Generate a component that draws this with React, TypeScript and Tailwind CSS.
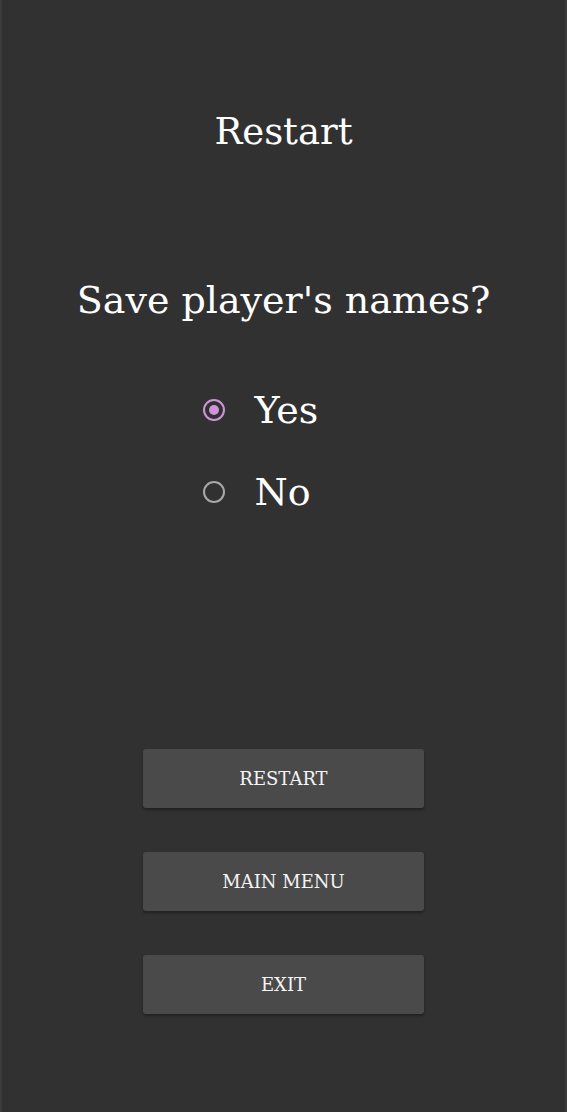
import { useState } from 'react';

const serif = { fontFamily: '"DejaVu Serif", "Liberation Serif", serif' };

function Radio({ checked }: { checked: boolean }) {
  return (
    <span
      className={`flex h-[22px] w-[22px] items-center justify-center rounded-full border-2 ${
        checked ? 'border-[#ce93d8]' : 'border-[#a8a8a8]'
      }`}
    >
      {checked && <span className="h-[10px] w-[10px] rounded-full bg-[#ce93d8]" />}
    </span>
  );
}

export default function App() {
  const [save, setSave] = useState(true);
  const buttons = ['RESTART', 'MAIN MENU', 'EXIT'];

  return (
    <div
      className="flex min-h-[1112px] w-full flex-col items-center border-x-2 border-[#3a3a3a] bg-[#313131] text-white"
      style={serif}
    >
      {/* Title */}
      <h1 className="mt-[108px] text-[37px] leading-[48px]">Restart</h1>

      {/* Question */}
      <p className="mt-[120px] text-[38px] leading-[48px]">Save player's names?</p>

      {/* Options */}
      <div className="mt-[62px] flex w-[162px] flex-col gap-[34px]">
        {[
          { label: 'Yes', value: true },
          { label: 'No', value: false },
        ].map((o) => (
          <button
            key={o.label}
            onClick={() => setSave(o.value)}
            className="flex items-center gap-[30px] text-[38px] leading-[48px]"
          >
            <Radio checked={save === o.value} />
            <span>{o.label}</span>
          </button>
        ))}
      </div>

      {/* Actions */}
      <div className="mt-[233px] flex flex-col gap-[44px]">
        {buttons.map((b) => (
          <button
            key={b}
            className="h-[59px] w-[281px] rounded-[3px] bg-[#4a4a4a] text-[18px] text-[#f4f4f4] shadow-[0_2px_3px_rgba(0,0,0,0.35)]"
          >
            {b}
          </button>
        ))}
      </div>
    </div>
  );
}
